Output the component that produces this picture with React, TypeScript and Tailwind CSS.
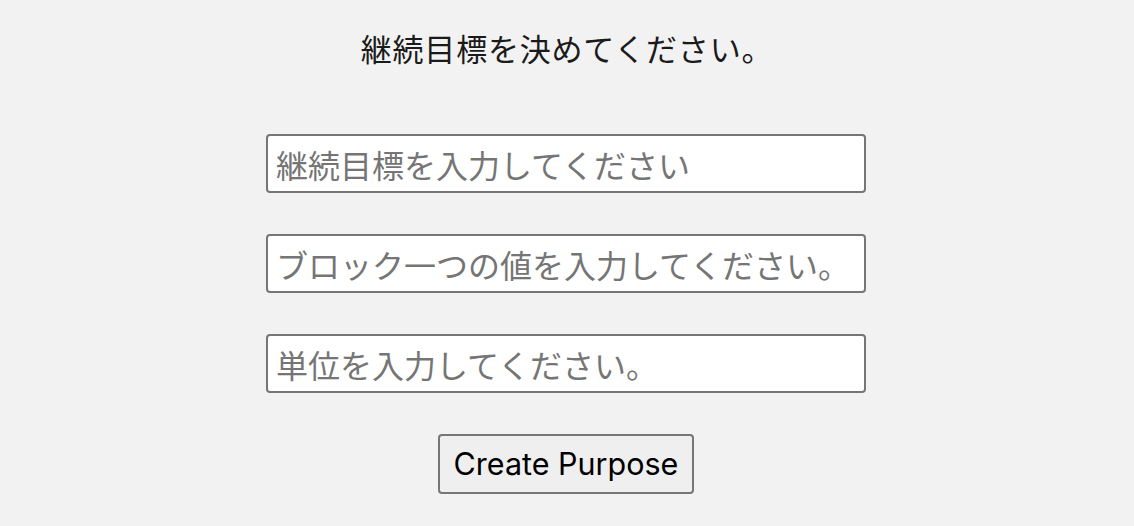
export default function App() {
  const fields = [
    '継続目標を入力してください',
    'ブロック一つの値を入力してください。',
    '単位を入力してください。',
  ];

  return (
    <div
      className="min-h-[526px] w-full bg-[#f2f2f2] flex flex-col items-center pt-[28px]"
      style={{ fontFamily: '"Noto Sans CJK JP", "Noto Sans", sans-serif' }}
    >
      <h1 className="text-[31px] leading-[40px] tracking-[0.8px] text-[#1a1a1a] font-normal">
        継続目標を決めてください。
      </h1>

      <div className="mt-[66px] flex flex-col items-center gap-[41px] -translate-x-[1px]">
        {fields.map((f) => (
          <input
            key={f}
            type="text"
            placeholder={f}
            className="w-[600px] h-[59px] bg-white border-2 border-[#767676] rounded-[4px] pl-[8px] pr-[4px] text-[32px] text-black placeholder:text-[#757575] outline-none"
          />
        ))}
        <button
          className="h-[60px] px-[14px] bg-[#efefef] border-2 border-[#767676] rounded-[4px] text-[30.5px] text-black"
          style={{ fontFamily: 'Inter, "Liberation Sans", sans-serif' }}
        >
          Create Purpose
        </button>
      </div>
    </div>
  );
}
